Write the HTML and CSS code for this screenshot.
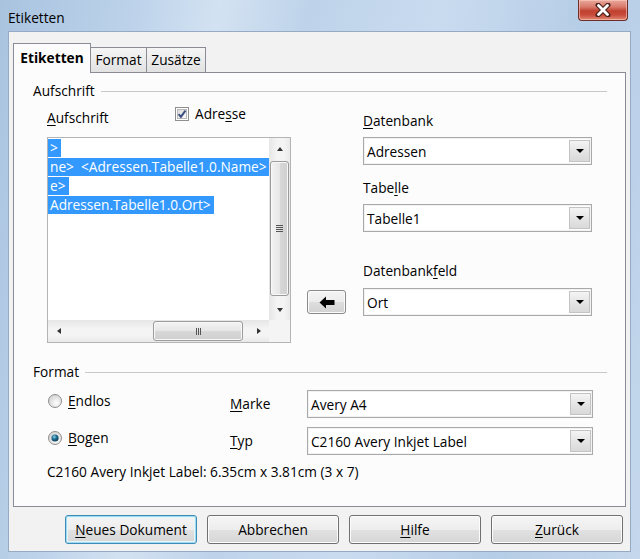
FILE: index.html
```html
<!DOCTYPE html>
<html>
<head>
<meta charset="utf-8">
<link rel="stylesheet" href="styles.css">
</head>
<body>
<div class="window">
  <div class="titlebar">
    <span class="title">Etiketten</span>
    <div class="close">
      <svg width="16" height="14" viewBox="0 0 16 14">
        <path d="M3 2 L13 12 M13 2 L3 12" stroke="#4a211c" stroke-width="5" stroke-linecap="round"/>
        <path d="M3.5 2.5 L12.5 11.5 M12.5 2.5 L3.5 11.5" stroke="#fff" stroke-width="2.8" stroke-linecap="round"/>
      </svg>
    </div>
  </div>
  <div class="client">
    <div class="tabs">
      <div class="tab active">Etiketten</div>
      <div class="tab">Format</div>
      <div class="tab">Zusätze</div>
    </div>
    <div class="page">
      <div class="group-head"><span>Aufschrift</span><span class="rule"></span></div>
      <div class="ins-body">
        <div class="col-left">
          <div class="label-row">
            <span class="lbl-auf"><u>A</u>ufschrift</span>
            <span class="check">
              <svg class="cb" width="14" height="14" viewBox="0 0 14 14">
                <defs>
                  <linearGradient id="cbg" x1="0" y1="0" x2="1" y2="1">
                    <stop offset="0" stop-color="#dcdcdc"/>
                    <stop offset="1" stop-color="#fafafa"/>
                  </linearGradient>
                </defs>
                <rect x="0.5" y="0.5" width="13" height="13" fill="#fff" stroke="#8e8f8f"/>
                <rect x="2.5" y="2.5" width="9" height="9" fill="url(#cbg)" stroke="#b9b9b9"/>
                <path d="M3.6 7.2 L5.9 9.8 L10.4 3.6" fill="none" stroke="#3a4f80" stroke-width="2"/>
              </svg>
              <span>Adre<u>s</u>se</span>
            </span>
          </div>
          <div class="listbox">
            <div class="lb-text">
              <div class="line"><span class="sel">&gt;</span></div>
              <div class="line"><span class="sel">ne&gt;  &lt;Adressen.Tabelle1.0.Name&gt;</span></div>
              <div class="line"><span class="sel">e&gt;</span></div>
              <div class="line"><span class="sel">Adressen.Tabelle1.0.Ort&gt;</span></div>
            </div>
            <div class="vscroll">
              <div class="sb-btn"><span class="tri-up"></span></div>
              <div class="vthumb"><span class="grip-v"><i></i><i></i><i></i><i></i></span></div>
              <div class="sb-btn"><span class="tri-down"></span></div>
            </div>
            <div class="hscroll">
              <div class="sb-btn h"><span class="tri-left"></span></div>
              <div class="htrack"><div class="hthumb"><span class="grip-h"><i></i><i></i><i></i></span></div></div>
              <div class="sb-btn h"><span class="tri-right"></span></div>
            </div>
            <div class="corner"></div>
          </div>
        </div>
        <div class="col-mid">
          <div class="arrow-btn">
            <svg width="16" height="13" viewBox="0 0 16 13">
              <path d="M0.5 6.5 L7 0.5 L7 4 L15.5 4 L15.5 9 L7 9 L7 12.5 Z" fill="#000"/>
            </svg>
          </div>
        </div>
        <div class="col-right">
          <div class="lbl l1"><u>D</u>atenbank</div>
          <div class="combo c1"><span>Adressen</span><span class="cbtn"><i></i></span></div>
          <div class="lbl l2">Tabe<u>l</u>le</div>
          <div class="combo c2"><span>Tabelle1</span><span class="cbtn"><i></i></span></div>
          <div class="lbl l3">Datenbank<u>f</u>eld</div>
          <div class="combo c3"><span>Ort</span><span class="cbtn"><i></i></span></div>
        </div>
      </div>
      <div class="group-head g2"><span>Format</span><span class="rule"></span></div>
      <div class="fmt-grid">
        <div class="radio">
          <svg width="14" height="14" viewBox="0 0 14 14">
            <defs>
              <radialGradient id="rg1" cx="0.6" cy="0.65" r="0.7">
                <stop offset="0" stop-color="#ffffff"/>
                <stop offset="1" stop-color="#cfcfcf"/>
              </radialGradient>
            </defs>
            <circle cx="7" cy="7" r="6.5" fill="url(#rg1)" stroke="#8e8f8f"/>
          </svg>
          <span><u>E</u>ndlos</span>
        </div>
        <div class="flbl"><u>M</u>arke</div>
        <div class="combo"><span>Avery A4</span><span class="cbtn"><i></i></span></div>
        <div class="radio">
          <svg width="14" height="14" viewBox="0 0 14 14">
            <defs>
              <radialGradient id="rg2" cx="0.6" cy="0.65" r="0.7">
                <stop offset="0" stop-color="#ffffff"/>
                <stop offset="1" stop-color="#cfcfcf"/>
              </radialGradient>
              <radialGradient id="rd" cx="0.4" cy="0.35" r="0.7">
                <stop offset="0" stop-color="#8fd1ea"/>
                <stop offset="0.45" stop-color="#1f6f93"/>
                <stop offset="1" stop-color="#0b3550"/>
              </radialGradient>
            </defs>
            <circle cx="7" cy="7" r="6.5" fill="url(#rg2)" stroke="#8e8f8f"/>
            <circle cx="7" cy="7" r="3.6" fill="url(#rd)"/>
          </svg>
          <span><u>B</u>ogen</span>
        </div>
        <div class="flbl"><u>T</u>yp</div>
        <div class="combo"><span>C2160 Avery Inkjet Label</span><span class="cbtn"><i></i></span></div>
      </div>
      <div class="info">C2160 Avery Inkjet Label: 6.35cm x 3.81cm (3 x 7)</div>
    </div>
    <div class="buttons">
      <div class="btn default"><span><u>N</u>eues Dokument</span></div>
      <div class="btn"><span>Abbrechen</span></div>
      <div class="btn"><span><u>H</u>ilfe</span></div>
      <div class="btn"><span><u>Z</u>urück</span></div>
    </div>
  </div>
</div>
</body>
</html>
```
FILE: styles.css
```css
* { box-sizing: border-box; }
html, body { margin: 0; padding: 0; }
body {
  width: 640px;
  height: 559px;
  overflow: hidden;
  font-family: "Open Sans", "Noto Sans", sans-serif;
  font-size: 13.7px;
  color: #000;
}
u { text-decoration: underline; text-underline-offset: 2px; }

.window {
  width: 640px;
  height: 559px;
  display: flex;
  flex-direction: column;
  padding: 0 9px 7px 8px;
  background:
    linear-gradient(100deg, #a9c3df 0%, #bcd2ea 18%, #d3e2f2 30%, #bed3ea 42%, #c9dbef 60%, #b6cde7 80%, #c4d7ec 100%);
}

.titlebar {
  height: 31px;
  display: flex;
  align-items: flex-start;
  flex-shrink: 0;
}
.title {
  margin-top: 9px;
  line-height: 18px;
  color: #000;
}
.close {
  margin-left: auto;
  margin-right: 3px;
  width: 50px;
  height: 21px;
  border: 1px solid #6b2e28;
  border-top: none;
  border-radius: 0 0 4px 4px;
  background: linear-gradient(#e9a99c 0%, #d9796a 35%, #c0402f 55%, #c94c3b 75%, #e08a74 100%);
  box-shadow: inset 0 0 0 1px rgba(255,210,200,0.55);
  display: flex;
  align-items: center;
  justify-content: center;
}

.client {
  flex: 1;
  display: flex;
  flex-direction: column;
  background: #f2f2f2;
  border: 1px solid #97aac3;
}

.tabs {
  display: flex;
  align-items: flex-start;
  margin: 11px 0 0 4px;
  height: 30px;
  position: relative;
  z-index: 1;
}
.tab {
  height: 25px;
  margin-top: 4px;
  padding: 0 4px;
  line-height: 23px;
  border: 1px solid #898c95;
  border-bottom: none;
  background: linear-gradient(#f5f5f5, #e2e2e2);
  margin-left: -1px;
}
.tab.active {
  height: 30px;
  margin-top: 0;
  margin-left: 0;
  width: 78px;
  text-align: center;
  line-height: 28px;
  font-weight: bold;
  background: #fcfcfc;
  border-color: #898c95;
  padding: 0;
}
.tab:nth-child(2) { width: 56px; margin-left: 0; border-left: none; text-align: center; padding: 0; }
.tab:nth-child(3) { width: 60px; text-align: center; padding: 0; }

.page {
  height: 435px;
  margin: -1px 4px 0 4px;
  border: 1px solid #898c95;
  background: #fcfcfc;
  flex-shrink: 0;
}

.group-head {
  display: flex;
  align-items: center;
  margin: 9px 18px 0 19px;
  line-height: 18px;
}
.group-head .rule {
  flex: 1;
  height: 1px;
  margin-left: 6px;
  background: #c9c9c9;
}
.group-head.g2 { margin-top: 20px; }

.ins-body {
  display: flex;
  padding-left: 33px;
}
.col-left { width: 244px; }
.label-row {
  display: flex;
  height: 24px;
  margin-top: 5px;
}
.lbl-auf {
  width: 128px;
  align-self: flex-end;
  line-height: 18px;
  margin-bottom: 2px;
}
.check {
  display: flex;
  align-items: flex-start;
  line-height: 18px;
}
.check .cb { margin-top: 2px; margin-right: 6px; }

.listbox {
  margin-top: 8px;
  height: 206px;
  border: 1px solid #b4b4b4;
  background: #fff;
  display: grid;
  grid-template-columns: 1fr 21px;
  grid-template-rows: 1fr 22px;
}
.lb-text {
  overflow: hidden;
  padding-top: 1px;
}
.line {
  height: 19px;
  line-height: 18px;
  white-space: pre;
}
.sel {
  display: inline-block;
  background: #3399ff;
  color: #fff;
  padding: 0 3px 0 2px;
  height: 18px;
}

.vscroll {
  display: flex;
  flex-direction: column;
  background: linear-gradient(to right, #e6e6e6, #f4f4f4 40%, #f4f4f4 70%, #e9e9e9);
}
.sb-btn {
  height: 21px;
  display: flex;
  align-items: center;
  justify-content: center;
  flex-shrink: 0;
}
.sb-btn.h { width: 21px; height: auto; }
.vthumb {
  margin: 2px 1px 0 1px;
  height: 135px;
  border: 1px solid #9b9b9b;
  border-radius: 3px;
  background: linear-gradient(to right, #f3f3f3, #e6e6e6 50%, #d8d8d8 51%, #cfcfcf);
  box-shadow: inset 0 0 0 1px #f8f8f8;
  display: flex;
  align-items: center;
  justify-content: center;
}
.vthumb + .sb-btn { margin-top: auto; }
.grip-v { display: flex; flex-direction: column; gap: 1px; }
.grip-v i { display: block; width: 7px; height: 1px; background: #555; }
.grip-h { display: flex; gap: 1px; }
.grip-h i { display: block; width: 1px; height: 7px; background: #555; }

.hscroll {
  display: flex;
  background: linear-gradient(#e6e6e6, #f4f4f4 40%, #f4f4f4 70%, #e9e9e9);
}
.htrack { flex: 1; display: flex; }
.hthumb {
  margin: 1px 0 1px 84px;
  width: 90px;
  border: 1px solid #9b9b9b;
  border-radius: 3px;
  background: linear-gradient(#f3f3f3, #e6e6e6 50%, #d8d8d8 51%, #cfcfcf);
  box-shadow: inset 0 0 0 1px #f8f8f8;
  display: flex;
  align-items: center;
  justify-content: center;
}
.corner { background: #f4f4f4; }

.tri-up { width: 0; height: 0; border-left: 3.5px solid transparent; border-right: 3.5px solid transparent; border-bottom: 4px solid #333; }
.tri-down { width: 0; height: 0; border-left: 3.5px solid transparent; border-right: 3.5px solid transparent; border-top: 4px solid #333; }
.tri-left { width: 0; height: 0; border-top: 3.5px solid transparent; border-bottom: 3.5px solid transparent; border-right: 4px solid #333; }
.tri-right { width: 0; height: 0; border-top: 3.5px solid transparent; border-bottom: 3.5px solid transparent; border-left: 4px solid #333; }

.col-mid { width: 39px; margin-left: 16px; }
.arrow-btn {
  margin-top: 190px;
  width: 39px;
  height: 24px;
  border: 1px solid #8a8a8a;
  border-radius: 3px;
  background: linear-gradient(#f4f4f4, #ececec 50%, #dedede 51%, #d2d2d2);
  box-shadow: inset 0 0 0 1px #fbfbfb;
  display: flex;
  align-items: center;
  justify-content: center;
}

.col-right { width: 229px; margin-left: 17px; }
.lbl { line-height: 18px; }
.l1 { margin-top: 12px; }
.l2 { margin-top: 14px; }
.l3 { margin-top: 30px; }
.c1, .c2 { margin-top: 7px; }
.c3 { margin-top: 8px; }

.combo {
  height: 28px;
  border: 1px solid #a9a9a9;
  background: #fff;
  display: flex;
  align-items: center;
  padding-left: 3px;
  box-shadow: inset 0 0 0 1px #f2f2f2;
}
.cbtn {
  margin-left: auto;
  margin-right: 1px;
  width: 21px;
  height: 22px;
  border: 1px solid #c3c3c3;
  background: linear-gradient(#f4f4f4, #e5e5e5 50%, #d9d9d9);
  display: flex;
  align-items: center;
  justify-content: center;
}
.cbtn i {
  display: block;
  width: 0; height: 0;
  border-left: 4px solid transparent;
  border-right: 4px solid transparent;
  border-top: 4px solid #000;
}

.fmt-grid {
  display: grid;
  grid-template-columns: 182px 77px 286px;
  grid-template-rows: 28px 28px;
  row-gap: 9px;
  margin-top: 9px;
  padding-left: 34px;
}
.radio {
  display: flex;
  align-items: center;
  gap: 6px;
  align-self: start;
  margin-top: 2px;
  line-height: 18px;
}
.flbl { align-self: center; line-height: 18px; }

.info {
  margin-top: 8px;
  padding-left: 33px;
  line-height: 18px;
}

.buttons {
  display: flex;
  justify-content: flex-end;
  gap: 10px;
  margin-top: 8px;
  padding-right: 7px;
}
.btn {
  width: 132px;
  height: 29px;
  border: 1px solid #707070;
  border-radius: 3px;
  background: linear-gradient(#f5f5f5, #ededed 50%, #e1e1e1 51%, #d6d6d6);
  box-shadow: inset 0 0 0 1px #fcfcfc;
  display: flex;
  align-items: center;
  justify-content: center;
}
.btn.default {
  border-color: #3c8db6;
  box-shadow: inset 0 0 0 1px #9fdaf0, inset 0 0 0 2px #e4f5fb;
}
```
